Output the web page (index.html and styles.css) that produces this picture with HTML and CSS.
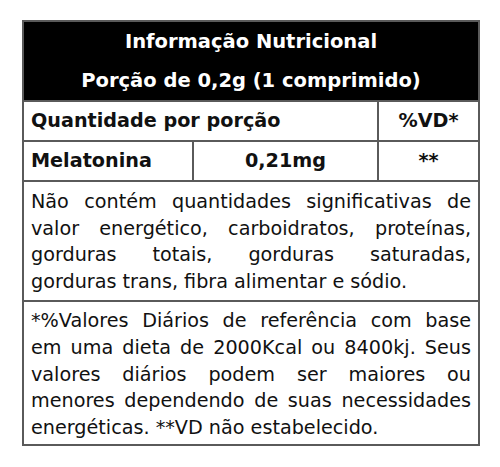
FILE: index.html
```html
<!DOCTYPE html>
<html lang="pt">
<head>
<meta charset="utf-8">
<title>Informação Nutricional</title>
<link rel="stylesheet" href="styles.css">
</head>
<body>
<table class="nutri">
  <colgroup>
    <col class="c1">
    <col class="c2">
    <col class="c3">
  </colgroup>
  <tr class="head">
    <th colspan="3">
      <div class="head-line">Informação Nutricional</div>
      <div class="head-line">Porção de 0,2g (1 comprimido)</div>
    </th>
  </tr>
  <tr class="row">
    <td colspan="2" class="label">Quantidade por porção</td>
    <td class="center">%VD*</td>
  </tr>
  <tr class="row">
    <td class="label">Melatonina</td>
    <td class="center">0,21mg</td>
    <td class="center">**</td>
  </tr>
  <tr>
    <td colspan="3" class="note note-1">
      <span class="jl">Não contém quantidades significativas de</span>
      <span class="jl">valor energético, carboidratos, proteínas,</span>
      <span class="jl">gorduras totais, gorduras saturadas,</span>
      <span class="ll">gorduras trans, fibra alimentar e sódio.</span>
    </td>
  </tr>
  <tr>
    <td colspan="3" class="note note-2">
      <span class="jl">*%Valores Diários de referência com base</span>
      <span class="jl">em uma dieta de 2000Kcal ou 8400kj. Seus</span>
      <span class="jl">valores diários podem ser maiores ou</span>
      <span class="jl">menores dependendo de suas necessidades</span>
      <span class="ll">energéticas. **VD não estabelecido.</span>
    </td>
  </tr>
</table>
</body>
</html>
```

FILE: styles.css
```css
html, body {
  margin: 0;
  background: #fff;
}
body {
  padding: 20px 0 0 22px;
  font-family: "DejaVu Sans", Verdana, sans-serif;
  color: #111;
}
.nutri {
  border-collapse: collapse;
  width: 456px;
  table-layout: fixed;
}
.c1 { width: 170px; }
.c2 { width: 185px; }
.c3 { width: 101px; }
.nutri td, .nutri th {
  border: 2px solid #5a5a5a;
  padding: 0;
}
.head th {
  background: #000;
  color: #fff;
  font-weight: bold;
  font-size: 19.5px;
  text-align: center;
}
.head-line {
  height: 39px;
  line-height: 39px;
}
.row td {
  height: 38px;
  font-size: 19.2px;
  font-weight: bold;
  line-height: 38px;
}
.nutri .label {
  padding-left: 7px;
}
.center {
  text-align: center;
}
.nutri .note {
  font-size: 19.2px;
  line-height: 26.6px;
  padding: 7px 7px 5px 7px;
}
.nutri .note-2 {
  padding-top: 6px;
  padding-bottom: 3px;
}
.jl, .ll {
  display: block;
  white-space: nowrap;
}
.jl {
  text-align: justify;
  text-align-last: justify;
}
```
